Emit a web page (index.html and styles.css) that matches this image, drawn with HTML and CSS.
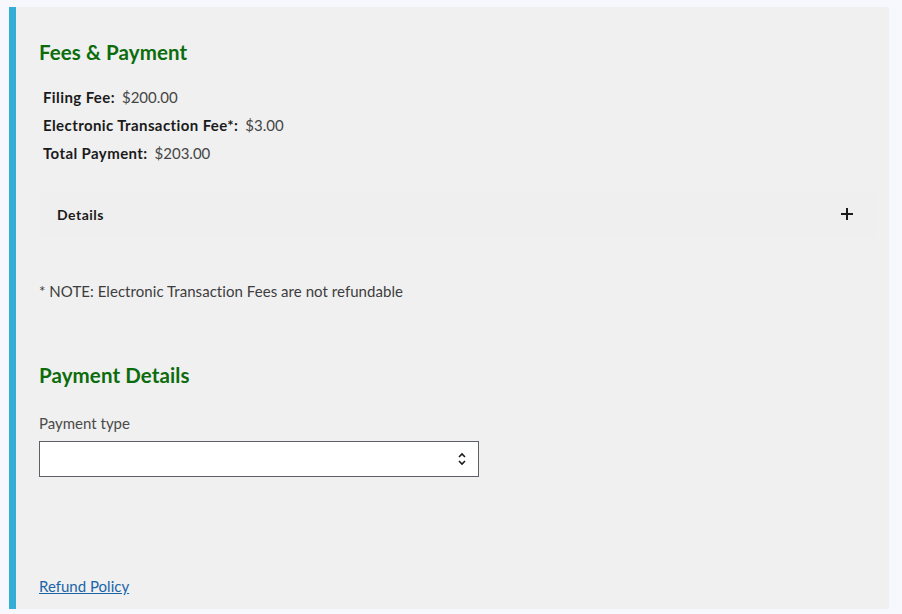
FILE: index.html
```html
<!DOCTYPE html>
<html lang="en">
<head>
<meta charset="utf-8">
<title>Fees &amp; Payment</title>
<link rel="stylesheet" href="styles.css">
</head>
<body>
<div class="page">
  <section class="card">
    <h2 class="title">Fees &amp; Payment</h2>
    <div class="fees">
      <div class="fee-row"><span class="fee-label">Filing Fee:</span><span class="fee-value">$200.00</span></div>
      <div class="fee-row"><span class="fee-label">Electronic Transaction Fee*:</span><span class="fee-value">$3.00</span></div>
      <div class="fee-row"><span class="fee-label">Total Payment:</span><span class="fee-value">$203.00</span></div>
    </div>
    <div class="details">
      <span class="details-label">Details</span>
      <svg class="plus" width="14" height="14" viewBox="0 0 14 14" aria-hidden="true"><path d="M7 1v12M1 7h12" stroke="#1b1b1b" stroke-width="2" fill="none"/></svg>
    </div>
    <p class="note">* NOTE: Electronic Transaction Fees are not refundable</p>
    <h2 class="title title-2">Payment Details</h2>
    <label class="field-label" for="ptype">Payment type</label>
    <div class="select">
      <span class="select-value" id="ptype"></span>
      <svg class="chev" width="10" height="16" viewBox="0 0 10 16" aria-hidden="true"><path d="M2 6l3-3 3 3M2 10l3 3 3-3" stroke="#1b1b1b" stroke-width="1.6" fill="none"/></svg>
    </div>
    <a class="refund" href="#">Refund Policy</a>
  </section>
</div>
</body>
</html>
```

FILE: styles.css
```css
* { box-sizing: border-box; }
html, body { margin: 0; padding: 0; }
body {
  background: #f7f8fd;
  font-family: "Source Sans Pro", Lato, "Open Sans", sans-serif;
  color: #1b1b1b;
}
.page {
  padding: 7px 13px 5px 9px;
}
.card {
  background: #f0f0f0;
  border-left: 7px solid #34aed5;
  height: 602px;
  padding: 33px 13px 0 23px;
  display: flex;
  flex-direction: column;
  align-items: flex-start;
}
.title {
  margin: 0;
  font-size: 20.5px;
  line-height: 24px;
  font-weight: 700;
  color: #0c6c0c;
  letter-spacing: 0.1px;
}
.fees {
  margin-top: 19px;
  padding-left: 4px;
  display: flex;
  flex-direction: column;
}
.fee-row {
  font-size: 15px;
  line-height: 28px;
  height: 28px;
  display: flex;
  gap: 7px;
}
.fee-label { font-weight: 700; color: #1b1b1b; letter-spacing: 0.4px; }
.fee-value { color: #454545; }
.details {
  align-self: stretch;
  margin-top: 24px;
  height: 46px;
  background: #efefef;
  display: flex;
  align-items: center;
  justify-content: space-between;
  padding: 0 22px 0 18px;
}
.details-label {
  font-size: 14px;
  font-weight: 700;
  letter-spacing: 0.5px;
}
.note {
  margin: 44px 0 0;
  font-size: 15px;
  line-height: 20px;
  color: #3d3d3d;
  letter-spacing: 0.05px;
}
.title-2 { margin-top: 62px; }
.field-label {
  margin-top: 26px;
  font-size: 15px;
  line-height: 20px;
  color: #4a4a4a;
}
.select {
  margin-top: 8px;
  width: 440px;
  height: 36px;
  background: #fff;
  border: 1px solid #5c5f66;
  display: flex;
  align-items: center;
  justify-content: flex-end;
  padding-right: 11px;
}
.refund {
  margin-top: 99px;
  font-size: 15px;
  line-height: 20px;
  color: #1a64a8;
  text-decoration: underline;
}
```
